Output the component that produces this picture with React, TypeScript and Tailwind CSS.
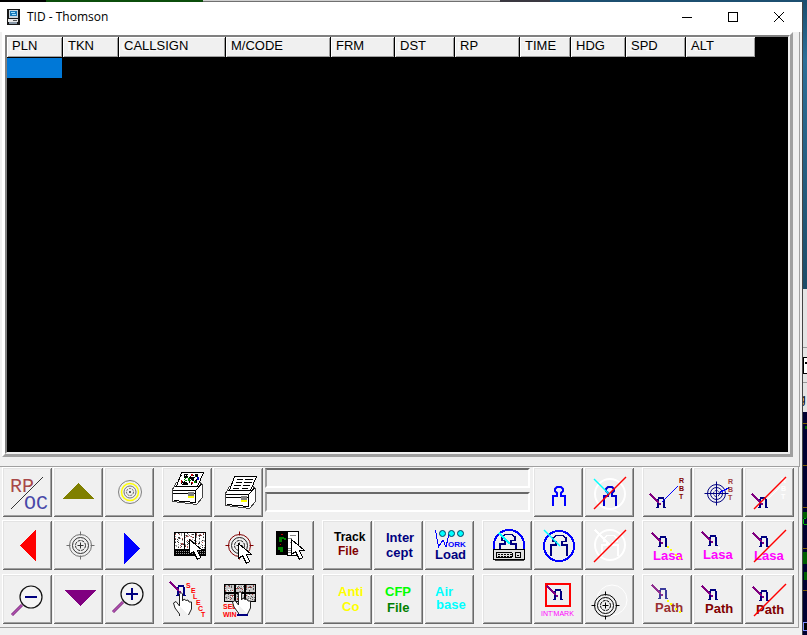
import React from "react";

const columns: { label: string; width: string }[] = [
  { label: "PLN", width: "w-[56px]" },
  { label: "TKN", width: "w-[56px]" },
  { label: "CALLSIGN", width: "w-[107px]" },
  { label: "M/CODE", width: "w-[105px]" },
  { label: "FRM", width: "w-[64px]" },
  { label: "DST", width: "w-[60px]" },
  { label: "RP", width: "w-[65px]" },
  { label: "TIME", width: "w-[51px]" },
  { label: "HDG", width: "w-[55px]" },
  { label: "SPD", width: "w-[60px]" },
  { label: "ALT", width: "w-[69px]" },
];

type Pt = { x: number; y: number };

function Tool({ label, children }: { label: string; children?: React.ReactNode }) {
  return (
    <button
      type="button"
      aria-label={label}
      className="size-[50px] shrink-0 bg-[#f0f0f0] shadow-[inset_1px_1px_0_#fff,inset_-1px_-1px_0_#696969,inset_2px_2px_0_#e3e3e3,inset_-2px_-2px_0_#a0a0a0]"
    >
      <svg viewBox="0 0 50 50" className="block size-full" fill="none" shapeRendering="crispEdges">
        {children}
      </svg>
    </button>
  );
}

function Group({ children }: { children: React.ReactNode }) {
  return <div className="flex shrink-0 gap-px">{children}</div>;
}

function Word({ x, y, fill, children }: Pt & { fill: string; children: string }) {
  return (
    <text x={x} y={y} fill={fill} className="font-['Liberation_Sans',sans-serif] text-[13px] font-bold">
      {children}
    </text>
  );
}

function Rbt({ x, y, fill }: Pt & { fill: string }) {
  return (
    <g fill={fill} className="font-['Liberation_Sans',sans-serif] text-[7px] font-bold">
      <text x={x} y={y}>R</text>
      <text x={x} y={y + 8}>B</text>
      <text x={x} y={y + 16}>T</text>
    </g>
  );
}

function Target({ x, y, r = 11, color, ring = color }: Pt & { r?: number; color: string; ring?: string }) {
  return (
    <g stroke={color} transform={`translate(${x} ${y})`} shapeRendering="auto">
      <circle r={r} stroke={ring} />
      <circle r={r - 3} />
      <circle r={r - 6} strokeDasharray="3 1" />
      <path d={`M0 ${-r - 3}v4M0 ${r - 1}v4M${-r - 3} 0h4M${r - 1} 0h4`} stroke={ring} />
      <path d="M-3 0h6M0 -3v6" />
    </g>
  );
}

function Track({ x, y, color = "#000080", tail = "#800080" }: Pt & { color?: string; tail?: string }) {
  return (
    <g transform={`translate(${x} ${y})`}>
      <path d="M2 11V3L3 1H7L8 3V11" stroke={color} strokeWidth="2" />
      <path d="M0 10h3v1h-3zM7 10h3v1h-3z" fill={color} />
      <path d="M-6 -3L3 6" stroke={tail} strokeWidth="1.500" />
      <path d="M3 6h2v2h-2z" fill={tail} />
    </g>
  );
}

function Person({ color }: { color: string }) {
  return (
    <path
      d="M20 39V29H24V26L22 24V22L24 20H28L30 22V24L28 26V29H32V39"
      stroke={color}
      strokeWidth="2"
      shapeRendering="auto"
    />
  );
}

function BigPerson({ y = 0, color }: { y?: number; color: string }) {
  return (
    <path
      transform={`translate(0 ${y})`}
      d="M18 36V25H23V22L20 21V18L23 15.500H30L33 18V21L29 22V25H34V36"
      stroke={color}
      strokeWidth="1.600"
    />
  );
}

function Strike() {
  return <path d="M10 42L42 10" stroke="#ff0000" strokeWidth="1.500" shapeRendering="auto" />;
}

function Cursor({ x, y }: Pt) {
  return (
    <path
      transform={`translate(${x} ${y})`}
      d="M0 0V15L4 12L8 20L11 18L8 11H13Z"
      fill="#fff"
      stroke="#000"
    />
  );
}

function Speckle({ x, y, w, h, colors }: Pt & { w: number; h: number; colors: string[] }) {
  const dots = [];
  for (let i = 0; i < w * h; i++) {
    const n = (i * 7919 + Math.floor(i / w) * 131 + ((i * i) % 61)) % 17;
    if (n < 5) {
      dots.push(
        <rect key={i} x={x + (i % w)} y={y + Math.floor(i / w)} width="1" height="1" fill={colors[n % colors.length]} />,
      );
    }
  }
  return <>{dots}</>;
}

function Printer({ x, y, color }: Pt & { color?: boolean }) {
  return (
    <g transform={`translate(${x} ${y})`} stroke="#000">
      <path d="M5.500 10.500L1.500 17.500V29.500L25.500 32.500L31.500 25.500V12.500L27.500 9.500Z" fill="#fff" stroke="#444" />
      <path d="M1.500 18.500H24.500L30.500 12M24.500 18.500V31M2 21.500H24M3 28.500L24 30.500" />
      <path d="M10.500 0.500H32.500L26.500 14.500H5.500Z" fill="#fff" />
      <path d="M4 14.500H27" />
      {color ? (
        <g stroke="none">
          <path d="M13 2h4v4h-4zM20 5h3v3h-3zM12 10h5v3h-5zM24 2h3v3h-3z" fill="#000" />
          <path d="M17 6h3v3h-3zM23 9h3v2h-3z" fill="#008000" />
          <path d="M20 2h2v2h-2zM10 8h2v3h-2zM20 10h2v2h-2z" fill="#c00000" />
          <path d="M26 5h2v3h-2zM15 8h2v2h-2z" fill="#0000c0" />
          <Speckle x={10} y={3} w={16} h={10} colors={["#000", "#fff", "#008000"]} />
        </g>
      ) : (
        <path d="M13 3.500h6M21 3.500h8M12 6.500h6M20 6.500h8M10 9.500h7M19 9.500h7M9 12.500h6M18 12.500h6" />
      )}
      <path d="M17 20h6v4h-6z" fill="#808080" stroke="none" />
      <path d="M17 24h6v2h-6z" fill="#ffff00" stroke="none" />
    </g>
  );
}

function Hand({ x, y }: Pt) {
  return (
    <path
      transform={`translate(${x} ${y})`}
      d="M7.500 14V2L9 0.500L10.500 2V9L12 7L14 8.500L16 8L17 10L19.500 10V17L16.500 23M7.500 14L4 9.500L1.500 11L3 16L7.500 22V24"
      fill="#fff"
      stroke="#222"
      shapeRendering="auto"
    />
  );
}

function Magnifier({ x, y, plus }: Pt & { plus?: boolean }) {
  return (
    <g transform={`translate(${x} ${y})`}>
      <circle r="11" stroke="#111" strokeWidth="1.200" fill="#f4f4f4" shapeRendering="auto" />
      <path d="M-19 18L-9 8" stroke="#803080" strokeWidth="3" shapeRendering="auto" />
      <path d="M-19 18L-9 8" stroke="#b050b0" strokeWidth="1.500" shapeRendering="auto" />
      <path d="M-6 0H6" stroke="#000080" strokeWidth="2" />
      {plus && <path d="M0 -6V6" stroke="#000080" strokeWidth="2" />}
    </g>
  );
}

function TrailDots() {
  return <path d="M25 26h2v2h-2zM28 29h2v2h-2zM33 34h2v2h-2zM37 37h2v2h-2z" fill="#ffff00" />;
}

function Toolbar() {
  return (
    <div className="mr-[3px] border-r border-b border-[#a0a0a0] pb-[3px] pl-[2px]">
      <div className="flex gap-2">
        <Group>
          <Tool label="RP OC">
            <text x="8" y="25" fill="#a84848" className="font-['Liberation_Mono',monospace] text-[20px]">RP</text>
            <text x="22" y="42" fill="#4848a8" className="font-['Liberation_Mono',monospace] text-[20px]">OC</text>
            <path d="M9 42L41 10" stroke="#333" />
          </Tool>
          <Tool label="Pan up"><path d="M25.500 16L41 32H10Z" fill="#808000" /></Tool>
          <Tool label="Range rings">
            <g shapeRendering="auto" transform="translate(26 25)">
              <circle r="11.500" stroke="#808080" />
              <circle r="8.500" stroke="#ffff00" strokeWidth="1.500" />
              <circle r="6" stroke="#777" />
              <circle r="3.500" stroke="#666" strokeDasharray="2 1" />
              <circle r="1" fill="#333" />
            </g>
          </Tool>
        </Group>
        <div className="flex">
          <Group>
            <Tool label="Print colour"><Printer x={9} y={5} color /></Tool>
            <Tool label="Print"><Printer x={11} y={9} /></Tool>
          </Group>
          <div className="mr-[3px] ml-[2px] flex w-[265px] flex-col gap-1 pt-px">
            <input aria-label="Message line 1" readOnly className="h-5 w-full border-2 border-t-[#696969] border-r-white border-b-white border-l-[#a0a0a0] bg-[#f0f0f0] outline-none" />
            <input aria-label="Message line 2" readOnly className="h-5 w-full border-2 border-t-[#696969] border-r-white border-b-white border-l-[#a0a0a0] bg-[#f0f0f0] outline-none" />
          </div>
          <Group>
            <Tool label="Operator"><Person color="#0000ff" /></Tool>
            <Tool label="Release operator">
              <circle cx="26" cy="27" r="15" stroke="#fff" strokeWidth="2" shapeRendering="auto" />
              <Person color="#0000d0" />
              <path d="M10 12L26 28" stroke="#00ffff" strokeWidth="1.500" shapeRendering="auto" />
              <Strike />
            </Tool>
          </Group>
        </div>
        <Group>
          <Tool label="Track RBT">
            <Track x={14} y={30} />
            <path d="M20 35L36 19" stroke="#0000ff" shapeRendering="auto" />
            <Rbt x={37} y={16} fill="#800000" />
          </Tool>
          <Tool label="Point RBT">
            <Target x={23.5} y={26.5} r={9} color="#000080" />
            <path d="M15 26.500H32M23.500 18V35" stroke="#000080" />
            <path d="M27 25L36 21" stroke="#0000ff" strokeWidth="1.500" />
            <Rbt x={35} y={17} fill="#a04040" />
          </Tool>
          <Tool label="Cancel RBT">
            <path d="M22 34L36 20" stroke="#fff" />
            <Rbt x={37} y={16} fill="#fff" />
            <Track x={14} y={30} />
            <Strike />
          </Tool>
        </Group>
      </div>

      <div className="mt-[3px] flex gap-2">
        <Group>
          <Tool label="Pan left"><path d="M34 10V41L18 25.500Z" fill="#ff0000" /></Tool>
          <Tool label="Centre"><Target x={27.5} y={25.5} color="#333" ring="#707070" /></Tool>
          <Tool label="Pan right"><path d="M20 13V44L36 28.500Z" fill="#0000ff" /></Tool>
        </Group>
        <Group>
          <Tool label="Select map area">
            <path d="M12.500 12.500H43.500V35.500H12.500Z" fill="#fff" stroke="#000" />
            <Speckle x={13} y={13} w={30} h={16} colors={["#333", "#a0a0a0", "#b05050"]} />
            <path d="M22.500 12V29M33.500 12V29" stroke="#000" />
            <path d="M12 29h32v7H12z" fill="#000" />
            <path d="M14 31.500H43M14 33.500H43" stroke="#999" strokeDasharray="1 1" />
            <Cursor x={27.5} y={19.5} />
          </Tool>
          <Tool label="Select centre">
            <Target x={26.5} y={25.5} color="#222" ring="#800000" />
            <Cursor x={25.5} y={23.5} />
          </Tool>
          <Tool label="Select window">
            <path d="M23 11.500H34.500V35H23Z" fill="#fff" stroke="#000" />
            <path d="M12 11h11v24H12z" fill="#000" />
            <path d="M15 17h5v2h-2v3h-3zM14 27h5v5h-3v-2h-2zM20 18h2v2h-2z" fill="#008000" />
            <path d="M17 14h2v1h-2zM16 24h1v1h-1z" fill="#c00000" />
            <path d="M26 15.500h6M24 18.500h4M24 28.500h5M24 30.500h5M24 32.500h5M26 22.500h3" stroke="#888" />
            <Cursor x={27.5} y={19.5} />
          </Tool>
        </Group>
        <Group>
          <Tool label="Track File">
            <text x="12" y="21" fill="#000" className="font-['Liberation_Sans',sans-serif] text-[12px] font-bold">Track</text>
            <text x="16" y="35" fill="#800000" className="font-['Liberation_Sans',sans-serif] text-[12px] font-bold">File</text>
          </Tool>
          <Tool label="Intercept">
            <Word x={13} y={22} fill="#000080">Inter</Word>
            <Word x={13} y={37} fill="#000080">cept</Word>
          </Tool>
          <Tool label="Work Load">
            <path d="M11.500 10L14.500 27L19 20L22 27L25 14" stroke="#0000ff" />
            <g fill="#00ffff" stroke="#004060" shapeRendering="auto">
              <circle cx="18.500" cy="13.500" r="3" />
              <circle cx="27.500" cy="13.500" r="3" />
              <circle cx="36.500" cy="13.500" r="3" />
            </g>
            <text x="24" y="27" fill="#0000ff" className="font-['Liberation_Sans',sans-serif] text-[8px] font-bold">ORK</text>
            <Word x={11} y={39} fill="#000080">Load</Word>
          </Tool>
        </Group>
        <Group>
          <Tool label="Operator keyboard">
            <circle cx="27" cy="25" r="15" stroke="#0000ff" strokeWidth="2" />
            <BigPerson y={-1} color="#000080" />
            <path d="M17 13L28 24" stroke="#00ffff" strokeWidth="2" />
            <path d="M11.500 29.500H42.500V39.500H11.500Z" fill="#e0e0e0" stroke="#000" />
            <path d="M14 32.500H30M33 32.500H39M14 37.500H30M33 37.500H39M14.500 33V37M30.500 33V37M33.500 33V37M38.500 33V37" stroke="#000" />
            <path d="M16 34.500H30M16 36H30M35 35H38" stroke="#000" strokeDasharray="2 1" />
            <path d="M13 40.500H42" stroke="#444" />
          </Tool>
          <Tool label="Operator position">
            <circle cx="26" cy="26" r="15" stroke="#0000ff" strokeWidth="2" />
            <BigPerson color="#000080" />
            <path d="M11 10L27 26" stroke="#00ffff" strokeWidth="1.500" shapeRendering="auto" />
          </Tool>
          <Tool label="Clear operator position">
            <circle cx="26" cy="25" r="15" stroke="#fff" strokeWidth="2" shapeRendering="auto" />
            <BigPerson color="#fff" />
            <path d="M11 10L27 26" stroke="#fff" strokeWidth="1.500" />
            <Strike />
          </Tool>
        </Group>
        <Group>
          <Tool label="Lasa with trail">
            <Track x={16} y={16} />
            <Word x={11} y={40} fill="#ff00ff">Lasa</Word>
            <TrailDots />
          </Tool>
          <Tool label="Lasa">
            <Track x={15} y={15} />
            <path d="M25 27h2v2h-2zM28 30h2v2h-2z" fill="#fff" />
            <Word x={10} y={39} fill="#ff00ff">Lasa</Word>
          </Tool>
          <Tool label="Cancel Lasa">
            <Track x={15} y={16} />
            <Word x={10} y={40} fill="#ff00ff">Lasa</Word>
            <Strike />
          </Tool>
        </Group>
      </div>

      <div className="mt-1 flex gap-2">
        <Group>
          <Tool label="Zoom out"><Magnifier x={29} y={23} /></Tool>
          <Tool label="Pan down"><path d="M12 16H43L27.500 32Z" fill="#800080" /></Tool>
          <Tool label="Zoom in"><Magnifier x={28} y={20} plus /></Tool>
        </Group>
        <Group>
          <Tool label="Select track">
            <Track x={14} y={11} />
            <Hand x={10} y={18} />
            <g fill="#ff0000" className="font-['Liberation_Sans',sans-serif] text-[7px] font-bold">
              <text x="24" y="14">S</text>
              <text x="29" y="19">E</text>
              <text x="31" y="25">L</text>
              <text x="34" y="31">E</text>
              <text x="36" y="37">C</text>
              <text x="39" y="43">T</text>
            </g>
          </Tool>
          <Tool label="Select window by hand">
            <path d="M11.500 10.500H42.500V27.500H11.500Z" fill="#c8c8c8" stroke="#000" />
            <Speckle x={12} y={11} w={30} h={16} colors={["#555", "#888", "#a04040", "#fff"]} />
            <path d="M11 19H43M22 10V28M32 10V28" stroke="#000" strokeWidth="1.500" />
            <text x="10" y="35" fill="#ff0000" className="font-['Liberation_Sans',sans-serif] text-[7px] font-bold">SEL</text>
            <text x="10" y="43" fill="#ff0000" className="font-['Liberation_Sans',sans-serif] text-[7px] font-bold">WIN</text>
            <Hand x={18} y={17} />
            <path d="M24 41H35" stroke="#000080" strokeWidth="2" />
          </Tool>
          <Tool label="Spare" />
        </Group>
        <Group>
          <Tool label="Anti Co">
            <Word x={16} y={22} fill="#ffff00">Anti</Word>
            <Word x={20} y={37} fill="#ffff00">Co</Word>
          </Tool>
          <Tool label="CFP File">
            <Word x={12} y={22} fill="#00ff00">CFP</Word>
            <Word x={14} y={38} fill="#008000">File</Word>
          </Tool>
          <Tool label="Air base">
            <Word x={11} y={22} fill="#00ffff">Air</Word>
            <Word x={12} y={35} fill="#00ffff">base</Word>
          </Tool>
        </Group>
        <Group>
          <Tool label="Spare" />
          <Tool label="Interrogation mark">
            <path d="M13 10H37V32H13Z" stroke="#ff0000" strokeWidth="2" />
            <Track x={20} y={15} />
            <text x="8" y="42" fill="#ff00ff" className="font-['Liberation_Sans',sans-serif] text-[7px]">INT'MARK</text>
          </Tool>
          <Tool label="Mark position">
            <circle cx="28" cy="26" r="15" stroke="#fff" shapeRendering="auto" />
            <Target x={21.5} y={31.5} color="#000" />
          </Tool>
        </Group>
        <Group>
          <Tool label="Path with trail">
            <Track x={16} y={14} color="#3c3c9c" tail="#903090" />
            <Word x={13} y={38} fill="#983030">Path</Word>
            <TrailDots />
          </Tool>
          <Tool label="Path">
            <Track x={15} y={15} />
            <Word x={12} y={39} fill="#800000">Path</Word>
          </Tool>
          <Tool label="Cancel path">
            <Track x={15} y={16} />
            <Word x={12} y={40} fill="#800000">Path</Word>
            <Strike />
          </Tool>
        </Group>
      </div>
    </div>
  );
}

function TitleBar() {
  return (
    <header className="flex h-[30px] items-center bg-white pl-[6px]">
      <svg viewBox="0 0 16 16" className="size-4" shapeRendering="crispEdges">
        <path d="M1 0H14V16H1z" fill="#181818" />
        <path d="M3 1h9v8H3z" fill="#c8d4dc" />
        <path d="M4 2h7v5H4z" fill="#1878b8" />
        <path d="M5 3h4v1H5zM6 5h4v1H6z" fill="#9fe0ff" />
        <path d="M2 10h10v3H2z" fill="#e8e8e8" />
        <path d="M7 11h4v1H7z" fill="#555" />
        <path d="M3 13h8v2H3z" fill="#8898a8" />
      </svg>
      <h1 className="ml-[5px] flex-1 font-['Open_Sans','Noto_Sans',sans-serif] text-xs text-black">TID - Thomson</h1>
      <button type="button" aria-label="Minimize" className="flex h-full w-[46px] items-center justify-center">
        <span className="h-px w-[10px] bg-black" />
      </button>
      <button type="button" aria-label="Maximize" className="flex h-full w-[46px] items-center justify-center">
        <span className="size-[10px] border border-black" />
      </button>
      <button type="button" aria-label="Close" className="flex h-full w-[46px] items-center justify-center">
        <svg viewBox="0 0 10 10" className="size-[10px]" stroke="#000">
          <path d="M0 0L10 10M10 0L0 10" />
        </svg>
      </button>
    </header>
  );
}

function TrackTable() {
  return (
    <div className="flex flex-1 flex-col border-2 border-t-[#808080] border-r-[#f0f0f0] border-b-[#f0f0f0] border-l-[#808080] bg-black">
      <table className="w-[748px] table-fixed border-separate border-spacing-0 font-['Liberation_Sans',sans-serif] text-[13px] leading-[18px]">
        <thead>
          <tr>
            {columns.map((c) => (
              <th key={c.label} scope="col" className={`${c.width} h-[21px] border-r border-b border-black p-0 text-left font-normal text-black last:border-r-0`}>
                <div className="h-5 bg-[#f0f0f0] pl-[5px] shadow-[inset_1px_1px_0_#fff,inset_-1px_-1px_0_#a0a0a0] [text-shadow:-3px_1px_0_#fafafa]">
                  {c.label}
                </div>
              </th>
            ))}
          </tr>
        </thead>
        <tbody>
          <tr>
            <td className="h-5 border-r border-black bg-[#0078d7] p-0" />
            <td colSpan={10} className="p-0" />
          </tr>
        </tbody>
      </table>
    </div>
  );
}

function DesktopEdge() {
  return (
    <aside className="flex w-1 shrink-0 flex-col overflow-hidden">
      <div className="h-[287px] bg-linear-to-b from-[#1c4f70] via-[#2c6f98] via-20% to-[#1d4c68]" />
      <div className="flex h-[123px] flex-col bg-[#e4e4e4]">
        <div className="mt-[58px] border-t border-[#999]" />
        <div className="mt-[9px] flex h-[17px] justify-end border border-r-0 border-black bg-white">
          <span className="mt-1 size-[2px] bg-black" />
        </div>
        <div className="mt-2 border-t border-[#999]" />
        <div className="mt-2 font-['Liberation_Sans',sans-serif] text-[12px] leading-4 text-black">
          <span className="-ml-1">g</span>
        </div>
      </div>
      <svg viewBox="0 0 4 223" preserveAspectRatio="xMinYMin slice" className="min-h-0 w-full flex-1 bg-[#000030]" shapeRendering="crispEdges">
        <path d="M0 11H4M0 53H4M0 95H4M0 136H4M0 178H4" stroke="#806000" />
        <path d="M2 14h2v3h-2zM0 100h4v6H0zM0 140h4v12H0zM1 160h3v8H1z" fill="#006000" />
        <path d="M1 106h2v1h-2zM0 107h1v5H0zM1 112h3v1H1z" fill="#00c000" />
        <path d="M0 210h4v8H0z" stroke="#8090ff" />
      </svg>
    </aside>
  );
}

export default function App() {
  return (
    <div className="flex min-h-screen flex-col overflow-hidden bg-[#f0f0f0]">
      <div className="flex h-[2px]">
        <div className="w-[46px] bg-black" />
        <div className="w-[157px] bg-[#0b4d0b]" />
        <div className="w-[297px] border-b border-[#707070] bg-[#d0d0d0]" />
        <div className="w-[50px] bg-[#3a3840]" />
        <div className="flex-1 bg-[#1c4f70]" />
      </div>
      <div className="flex flex-1">
        <main className="flex min-w-0 flex-1 flex-col border-r border-[#444] bg-[#f0f0f0]">
          <TitleBar />
          <div className="mr-[2px] flex flex-1 flex-col border-r border-b border-[#a0a0a0] pr-[6px] pb-[9px] pl-[2px]">
            <div className="flex flex-1 flex-col border-[3px] border-t-white border-r-[#a0a0a0] border-b-[#a0a0a0] border-l-white">
              <TrackTable />
            </div>
          </div>
          <Toolbar />
          <div className="h-[7px]" />
        </main>
        <DesktopEdge />
      </div>
    </div>
  );
}
